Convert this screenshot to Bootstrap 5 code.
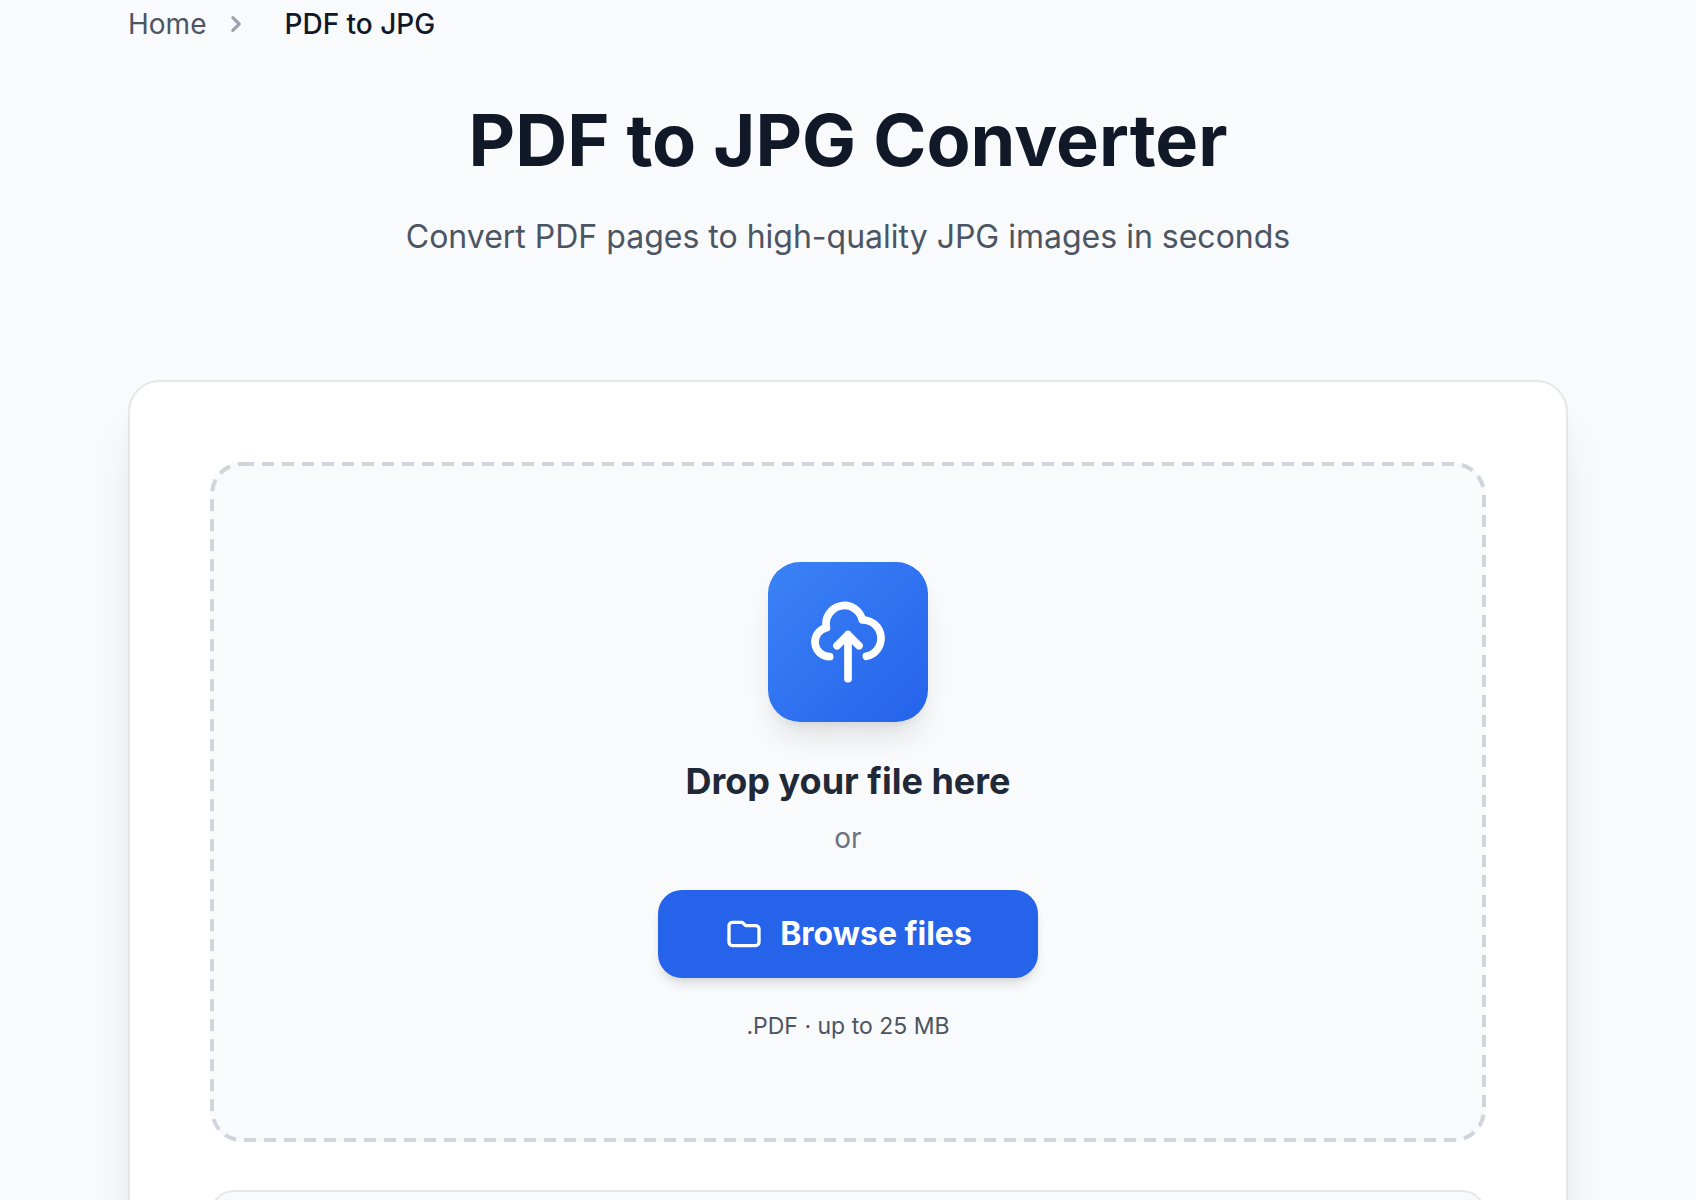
<!DOCTYPE html>
<html lang="en">
<head>
<meta charset="utf-8">
<meta name="viewport" content="width=device-width, initial-scale=1">
<title>PDF to JPG Converter</title>
<link href="https://cdn.jsdelivr.net/npm/bootstrap@5.3.0/dist/css/bootstrap.min.css" rel="stylesheet">
<style>
  body { font-family: Inter, "Liberation Sans", sans-serif; background: #f9fafb; color: #111827; overflow-x: hidden; }
  .page-shell { padding: 0 128px; }
  .crumbs { font-size: 28px; line-height: 40px; padding-top: 4px; }
  .crumbs a { color: #4b5563; }
  .crumb-sep { color: #9ca3af; margin: 0 32px 0 14px; }
  .crumb-current { font-weight: 500; }
  .page-head { padding: 56px 0 118px; }
  .page-head h1 { font-size: 72px; line-height: 80px; font-weight: 700; margin-bottom: 32px; }
  .page-head p { font-size: 32px; line-height: 50px; color: #4b5563; }
  .tool-panel { background: #fff; border: 2px solid #e5e7eb; border-radius: 32px; padding: 80px; box-shadow: 0 40px 50px -10px rgba(0,0,0,.1), 0 16px 20px -12px rgba(0,0,0,.1); }
  .drop-area { background: #f9fafb; border-radius: 32px; padding: 100px 52px; }
  .drop-outline { inset: 0; padding: 2px; overflow: visible; pointer-events: none; }
  .upload-tile { width: 160px; height: 160px; border-radius: 32px; color: #fff; background: linear-gradient(135deg, #3b82f6, #2563eb); box-shadow: 0 20px 30px -6px rgba(0,0,0,.1), 0 8px 12px -8px rgba(0,0,0,.1); }
  .drop-area h2 { font-size: 36px; line-height: 54px; font-weight: 700; color: #1f2937; margin: 32px 0 10px; }
  .or-text { font-size: 28px; line-height: 40px; color: #6b7280; margin-bottom: 32px; }
  .browse-btn { --bs-btn-color: #fff; --bs-btn-bg: #2563eb; --bs-btn-hover-bg: #1d4ed8; --bs-btn-hover-color: #fff; --bs-btn-font-size: 32px; --bs-btn-line-height: 48px; --bs-btn-font-weight: 700; --bs-btn-padding-x: 66px; --bs-btn-padding-y: 20px; --bs-btn-border-width: 0; --bs-btn-border-radius: 24px; box-shadow: 0 8px 12px -2px rgba(0,0,0,.1), 0 4px 8px -4px rgba(0,0,0,.1); }
  .limit-text { font-size: 23px; line-height: 32px; color: #4b5563; margin-top: 32px; }
  .options-box { background: #f9fafb; border: 2px solid #e5e7eb; border-radius: 24px; margin-top: 48px; min-height: 160px; }
</style>
<script src="https://cdn.jsdelivr.net/npm/bootstrap@5.3.0/dist/js/bootstrap.bundle.min.js"></script>
</head>
<body>
<div class="page-shell">
  <nav class="crumbs d-flex align-items-center" aria-label="Breadcrumb">
    <a href="#" class="text-decoration-none">Home</a>
    <svg class="crumb-sep" width="32" height="32" viewBox="0 0 20 20" fill="currentColor" aria-hidden="true"><path fill-rule="evenodd" d="M7.293 14.707a1 1 0 010-1.414L10.586 10 7.293 6.707a1 1 0 011.414-1.414l4 4a1 1 0 010 1.414l-4 4a1 1 0 01-1.414 0z" clip-rule="evenodd"/></svg>
    <span class="crumb-current" aria-current="page">PDF to JPG</span>
  </nav>
  <header class="page-head text-center">
    <h1>PDF to JPG Converter</h1>
    <p class="mb-0">Convert PDF pages to high-quality JPG images in seconds</p>
  </header>
  <main class="tool-panel">
    <section class="drop-area position-relative d-flex flex-column align-items-center text-center">
      <svg class="drop-outline position-absolute w-100 h-100" aria-hidden="true"><rect width="100%" height="100%" rx="30" fill="none" stroke="#d1d5db" stroke-width="4" stroke-dasharray="12 8"/></svg>
      <div class="upload-tile d-flex align-items-center justify-content-center">
        <svg width="88" height="88" viewBox="0 0 24 24" fill="none" stroke="currentColor" stroke-width="2.1" stroke-linecap="round" stroke-linejoin="round" aria-hidden="true"><path d="M7 16a4 4 0 01-.88-7.903A5 5 0 1115.9 6L16 6a5 5 0 011 9.9M15 13l-3-3m0 0l-3 3m3-3v12"/></svg>
      </div>
      <h2>Drop your file here</h2>
      <p class="or-text">or</p>
      <button type="button" class="btn browse-btn d-inline-flex align-items-center gap-3">
        <svg width="40" height="40" viewBox="0 0 24 24" fill="none" stroke="currentColor" stroke-width="2" stroke-linecap="round" stroke-linejoin="round" aria-hidden="true"><path d="M3 7v10a2 2 0 002 2h14a2 2 0 002-2V9a2 2 0 00-2-2h-6l-2-2H5a2 2 0 00-2 2z"/></svg>
        Browse files
      </button>
      <p class="limit-text mb-0">.PDF · up to 25 MB</p>
    </section>
    <section class="options-box"></section>
  </main>
</div>
</body>
</html>
